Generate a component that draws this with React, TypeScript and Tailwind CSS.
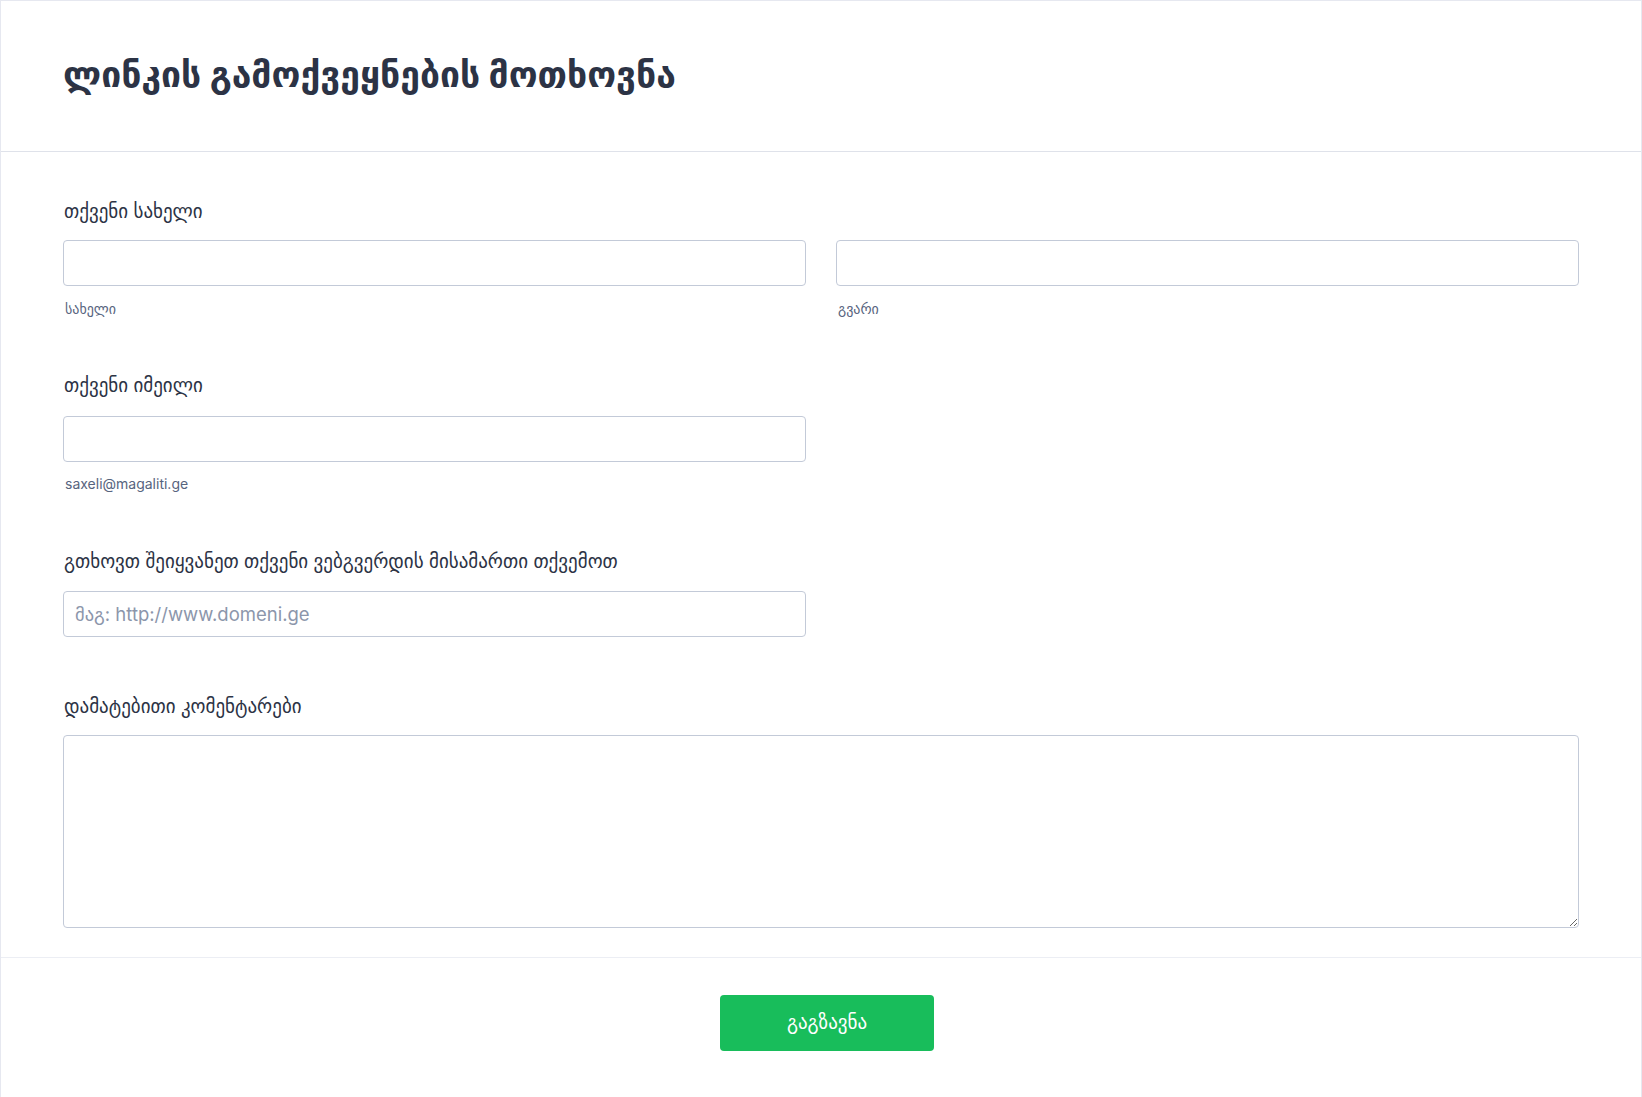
import React from 'react';

const font = { fontFamily: 'Inter, "DejaVu Sans", sans-serif' };

const inputCls =
  'block w-full h-[46px] rounded-[4px] border border-[#c3cad8] bg-white px-[11px] text-[18.5px] text-[#2c3345] placeholder-[#8c96ab] outline-none';

const App: React.FC = () => {
  return (
    <div
      className="min-h-screen w-full bg-white border border-[#e6e8f0] text-[#2c3345]"
      style={font}
    >
      {/* Header */}
      <div className="border-b border-[#dfe2ea] px-[62px] pt-[49px] pb-[51px]">
        <h1 className="text-[35.5px] leading-[50px] font-bold text-[#2c3345]">
          ლინკის გამოქვეყნების მოთხოვნა
        </h1>
      </div>

      {/* Form body */}
      <div className="px-[62px] pt-[48px] pb-[29px] border-b border-[#eceef4]">
        {/* Name */}
        <div>
          <label className="block text-[19px] leading-[24px] mb-[16px] px-[1px]">თქვენი სახელი</label>
          <div className="grid grid-cols-2 gap-[30px]">
            <div>
              <input type="text" className={inputCls} />
              <div className="mt-[14px] text-[14px] leading-[18px] text-[#57647e] px-[2px]">სახელი</div>
            </div>
            <div>
              <input type="text" className={inputCls} />
              <div className="mt-[14px] text-[14px] leading-[18px] text-[#57647e] px-[2px]">გვარი</div>
            </div>
          </div>
        </div>

        {/* Email */}
        <div className="mt-[56px]">
          <label className="block text-[19px] leading-[24px] mb-[18px] px-[1px]">თქვენი იმეილი</label>
          <div className="grid grid-cols-2 gap-[30px]">
            <div>
              <input type="email" className={inputCls} />
              <div className="mt-[13px] text-[14px] leading-[18px] text-[#57647e] px-[2px]">saxeli@magaliti.ge</div>
            </div>
          </div>
        </div>

        {/* Website */}
        <div className="mt-[57px]">
          <label className="block text-[19px] leading-[24px] mb-[17px] px-[1px]">
            გთხოვთ შეიყვანეთ თქვენი ვებგვერდის მისამართი თქვემოთ
          </label>
          <div className="grid grid-cols-2 gap-[30px]">
            <input type="text" className={inputCls} placeholder="მაგ: http://www.domeni.ge" />
          </div>
        </div>

        {/* Comments */}
        <div className="mt-[58px]">
          <label className="block text-[19px] leading-[24px] mb-[16px] px-[1px]">დამატებითი კომენტარები</label>
          <textarea className="block w-full h-[193px] rounded-[4px] border border-[#c3cad8] bg-white px-[11px] py-[10px] text-[18px] outline-none" />
        </div>
      </div>

      {/* Footer */}
      <div className="flex justify-center pl-[12px] pt-[37px] pb-[46px]">
        <button className="w-[214px] h-[56px] rounded-[4px] bg-[#18bd5b] text-white text-[19px]">
          გაგზავნა
        </button>
      </div>
    </div>
  );
};

export default App;
